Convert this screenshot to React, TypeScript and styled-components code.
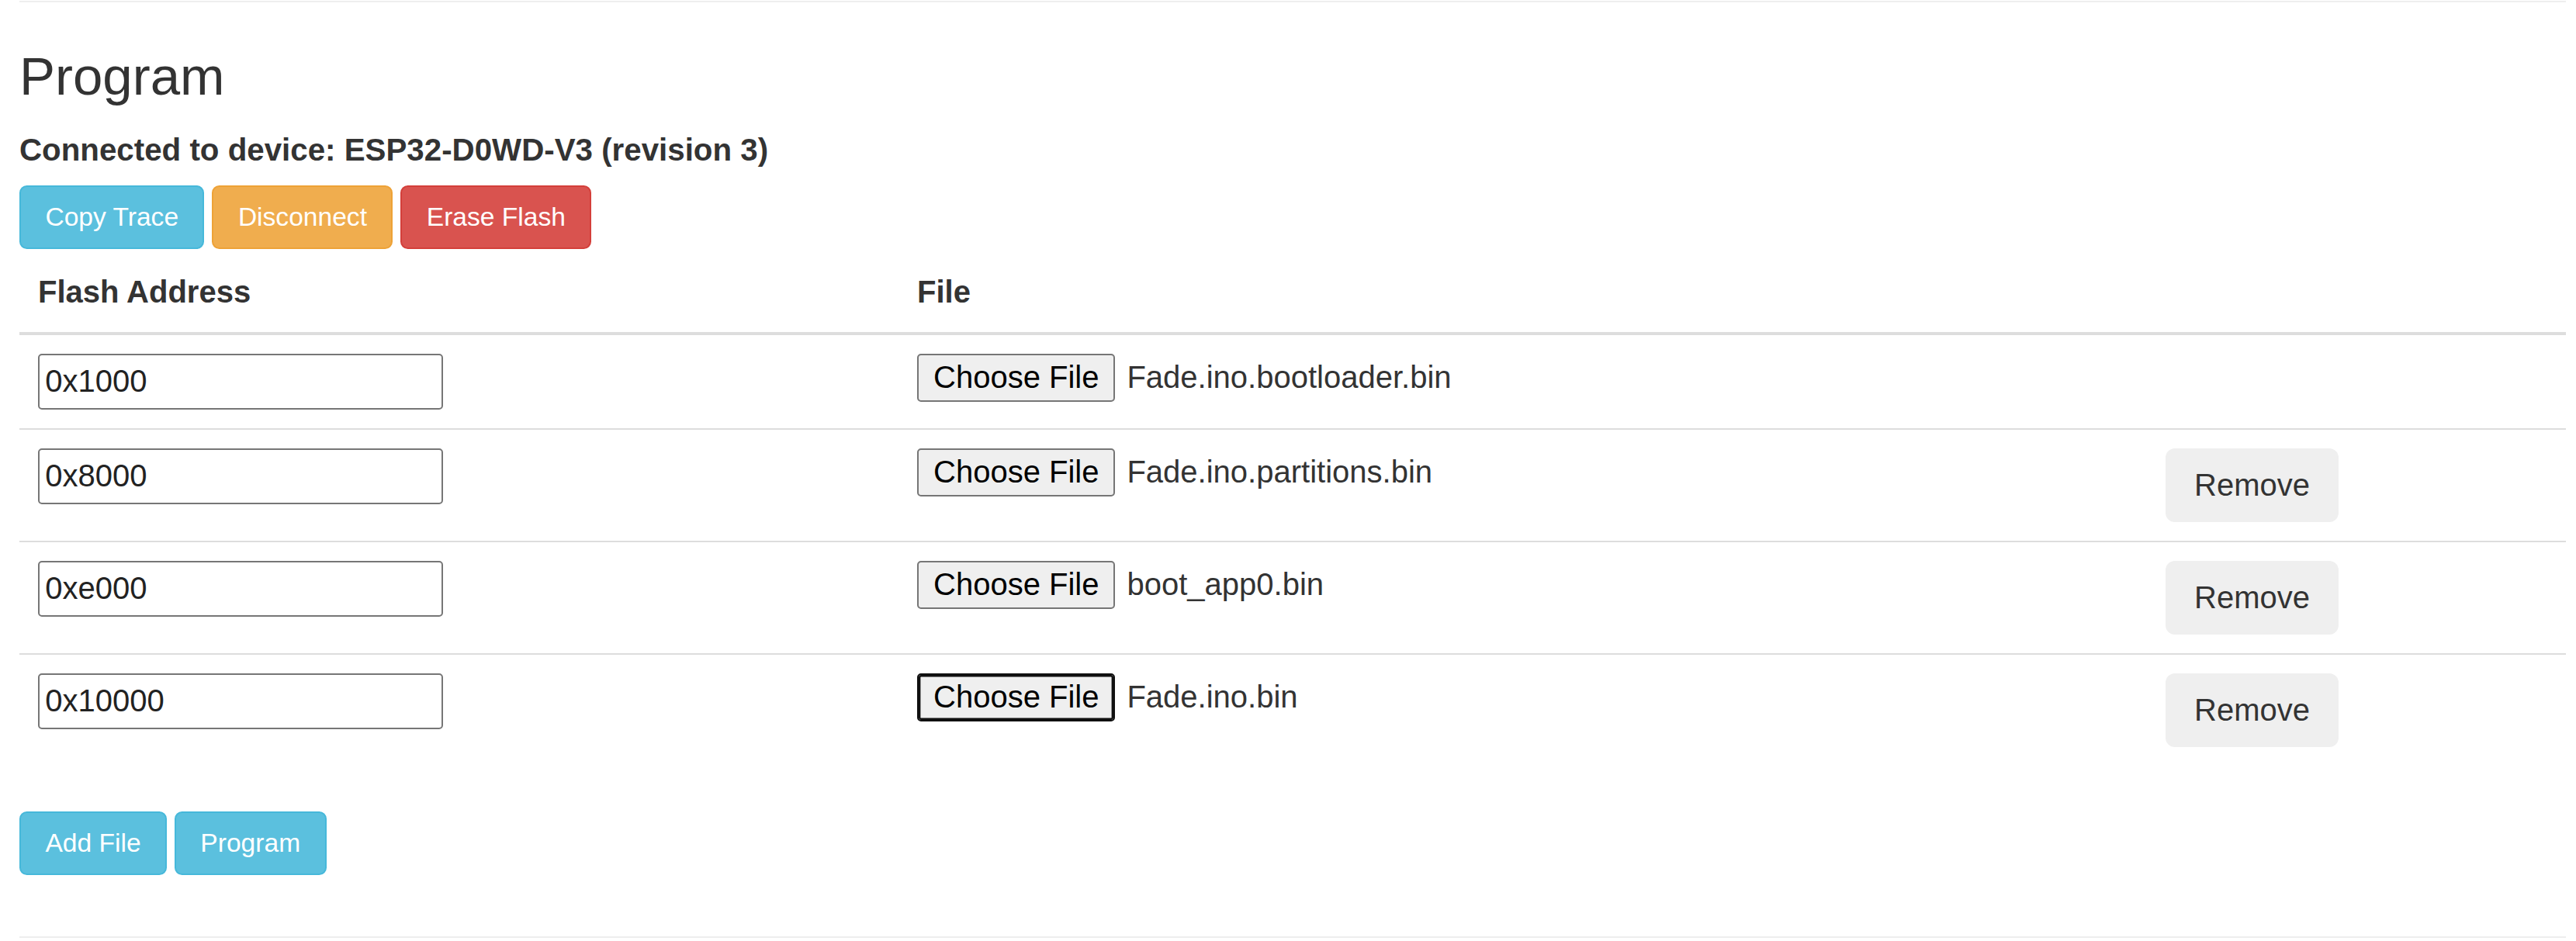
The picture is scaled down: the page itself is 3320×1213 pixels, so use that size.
import React from "react";
import styled, { createGlobalStyle } from "styled-components";

const GlobalStyle = createGlobalStyle`
  html, body { margin: 0; padding: 0; background: #fff; }
  body {
    font-family: "Liberation Sans", Arial, Helvetica, sans-serif;
    color: #333;
    font-size: 33.6px;
    line-height: 48px;
  }
  * { box-sizing: border-box; }
`;

const Page = styled.div`
  padding: 0 13px 0 25px;
`;

const Rule = styled.hr<{ $top: number; $bottom: number }>`
  margin: ${(p) => p.$top}px 0 ${(p) => p.$bottom}px;
  border: 0;
  border-top: 2.4px solid #eee;
  height: 0;
`;

const Title = styled.h2`
  margin: 0 0 33px;
  font-size: 69px;
  line-height: 75.9px;
  font-weight: 500;
  color: #333;
`;

const Status = styled.div`
  font-size: 40.3px;
  line-height: 48px;
  font-weight: 700;
  margin-bottom: 21px;
`;

const Toolbar = styled.div<{ $mt?: number }>`
  display: flex;
  gap: 10px;
  margin-top: ${(p) => p.$mt ?? 0}px;
`;

const palette = {
  info: { bg: "#5bc0de", border: "#46b8da" },
  warning: { bg: "#f0ad4e", border: "#eea236" },
  danger: { bg: "#d9534f", border: "#d43f3a" },
};

const Btn = styled.button<{ $variant: keyof typeof palette }>`
  font-family: "Liberation Sans", Arial, sans-serif;
  font-size: 33.6px;
  line-height: 48px;
  padding: 15px 31.4px;
  border: 2.4px solid ${(p) => palette[p.$variant].border};
  background: ${(p) => palette[p.$variant].bg};
  color: #fff;
  border-radius: 9.6px;
  cursor: pointer;
  white-space: nowrap;
`;

const Table = styled.div`
  margin-top: 11px;
  display: grid;
  grid-template-columns: 1133px 1609px 1fr;
`;

const HeadCell = styled.div`
  padding: 20px 24px 28px;
  font-size: 40px;
  line-height: 48px;
  font-weight: 700;
  border-bottom: 4.8px solid #ddd;
`;

const Cell = styled.div<{ $first: boolean }>`
  padding: 24px;
  border-top: ${(p) => (p.$first ? "0" : "2.4px solid #ddd")};
  font-size: 40px;
  line-height: 48px;
  min-height: 120px;
`;

const AddressInput = styled.input`
  display: block;
  width: 522px;
  height: 72px;
  border: 2.4px solid #767676;
  border-radius: 5px;
  padding: 0 7.2px;
  font-family: "Liberation Sans", Arial, sans-serif;
  font-size: 40px;
  color: #222;
  background: #fff;
`;

const FilePicker = styled.div`
  display: flex;
  align-items: baseline;
  gap: 15px;
`;

const ChooseButton = styled.span<{ $focused?: boolean }>`
  display: inline-block;
  height: 62px;
  line-height: 57px;
  padding: 0 19px;
  border: 2.4px solid ${(p) => (p.$focused ? "#101010" : "#767676")};
  box-shadow: ${(p) => (p.$focused ? "inset 0 0 0 2.4px #101010" : "none")};
  border-radius: 5px;
  background: #efefef;
  color: #000;
  font-size: 40px;
  white-space: nowrap;
`;

const FileName = styled.span`
  color: #333;
  font-size: 40px;
  white-space: nowrap;
`;

const RemoveButton = styled.button`
  display: block;
  width: 223px;
  height: 95px;
  border: 0;
  border-radius: 12px;
  background: #efefef;
  color: #333;
  font-family: "Liberation Sans", Arial, sans-serif;
  font-size: 40px;
  padding: 0;
  cursor: pointer;
`;

const rows = [
  { addr: "0x1000", file: "Fade.ino.bootloader.bin", removable: false, focused: false },
  { addr: "0x8000", file: "Fade.ino.partitions.bin", removable: true, focused: false },
  { addr: "0xe000", file: "boot_app0.bin", removable: true, focused: false },
  { addr: "0x10000", file: "Fade.ino.bin", removable: true, focused: true },
];

export default function App() {
  return (
    <>
      <GlobalStyle />
      <Page>
        <Rule $top={1} $bottom={57.7} />
        <Title>Program</Title>
        <Status>Connected to device: ESP32-D0WD-V3 (revision 3)</Status>
        <Toolbar>
          <Btn $variant="info">Copy Trace</Btn>
          <Btn $variant="warning">Disconnect</Btn>
          <Btn $variant="danger">Erase Flash</Btn>
        </Toolbar>
        <Table>
          <HeadCell>Flash Address</HeadCell>
          <HeadCell>File</HeadCell>
          <HeadCell />
          {rows.map((r, i) => (
            <React.Fragment key={r.addr}>
              <Cell $first={i === 0}>
                <AddressInput defaultValue={r.addr} />
              </Cell>
              <Cell $first={i === 0}>
                <FilePicker>
                  <ChooseButton $focused={r.focused}>Choose File</ChooseButton>
                  <FileName>{r.file}</FileName>
                </FilePicker>
              </Cell>
              <Cell $first={i === 0}>
                {r.removable && <RemoveButton>Remove</RemoveButton>}
              </Cell>
            </React.Fragment>
          ))}
        </Table>
        <Toolbar $mt={59}>
          <Btn $variant="info">Add File</Btn>
          <Btn $variant="info">Program</Btn>
        </Toolbar>
        <Rule $top={79} $bottom={0} />
      </Page>
    </>
  );
}
